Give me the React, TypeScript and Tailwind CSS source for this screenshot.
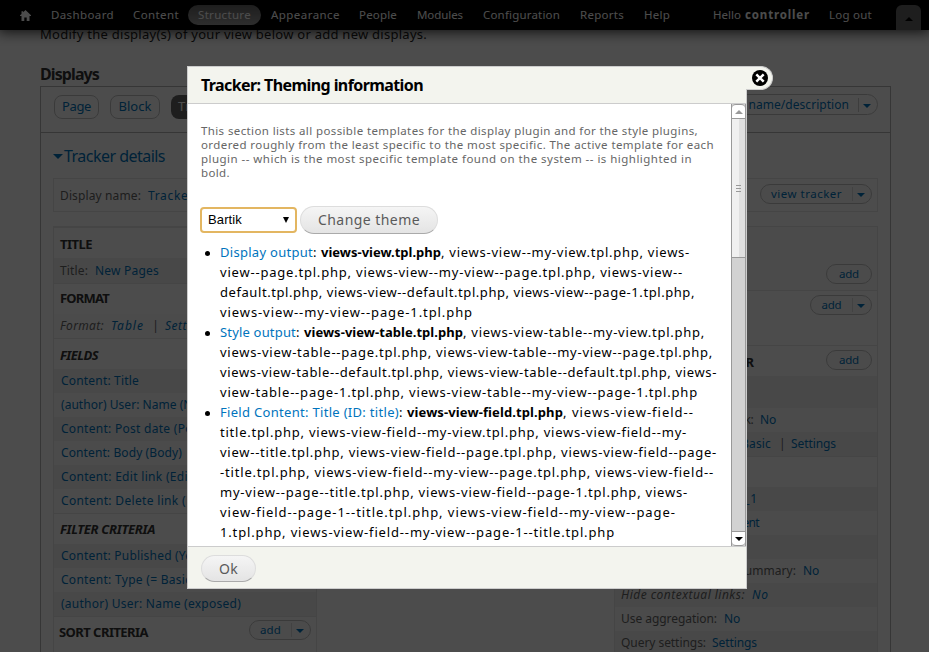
import { useLayoutEffect, useRef } from "react";
import type { ReactNode } from "react";
import clsx from "clsx";

/** Single line of text tracked so that it fills exactly `w` pixels. */
function T({ w, className, children }: { w: number; className?: string; children: string }) {
  const ref = useRef<HTMLSpanElement>(null);
  useLayoutEffect(() => {
    const el = ref.current;
    if (!el) return;
    el.style.letterSpacing = "0px";
    const natural = el.getBoundingClientRect().width;
    el.style.letterSpacing = `${(w - natural) / children.length}px`;
  }, [w, children]);
  return (
    <span ref={ref} className={clsx("inline-block shrink-0 whitespace-pre", className)}>
      {children}
    </span>
  );
}

function Caret({ className, size = "h-1 w-2" }: { className?: string; size?: string }) {
  return (
    <svg viewBox="0 0 8 4" preserveAspectRatio="none" className={clsx("shrink-0 fill-current", size, className)}>
      <path d="M0 0h8L4 4z" />
    </svg>
  );
}

const link = "text-[#0074bd]";

function DropButton({ label, w, width, split }: { label: string; w: number; width: string; split?: boolean }) {
  return (
    <div
      className={clsx(
        "flex h-5 shrink-0 items-center rounded-full border border-[#c4c4c4] bg-[#fcfcfc] text-[11.5px] text-[#0074bd]",
        width,
      )}
    >
      <div className="flex flex-1 justify-center">
        <T w={w}>{label}</T>
      </div>
      {split && (
        <div className="flex h-3.5 w-[19px] items-center justify-center border-l border-[#ddd]">
          <Caret className="mr-0.5 mt-px" />
        </div>
      )}
    </div>
  );
}

function Head({ children, className }: { children?: ReactNode; className?: string }) {
  return (
    <div
      className={clsx(
        "flex items-center border-t border-[#e8e8e8] pl-1.5 pr-[5px] text-[13px] font-bold tracking-tight text-[#333]",
        className,
      )}
    >
      {children}
    </div>
  );
}

function Row({ shade, italic, children, h = "h-6" }: { shade?: boolean; italic?: boolean; children?: ReactNode; h?: string }) {
  return (
    <div
      className={clsx(
        "flex items-center pl-[7px] text-xs text-[#666]",
        h,
        shade ? "bg-[#f2f2f2]" : "bg-[#fbfbfb]",
        italic && "italic",
      )}
    >
      {children}
    </div>
  );
}

function Toolbar() {
  const items: [string, number, string][] = [
    ["Appearance", 69, "ml-2.5"],
    ["People", 38, "ml-[19px]"],
    ["Modules", 46, "ml-5"],
    ["Configuration", 77, "ml-5"],
    ["Reports", 44, "ml-5"],
    ["Help", 26, "ml-5"],
  ];
  return (
    <div className="relative z-10 flex h-[30px] items-center bg-black pl-5 text-[11.5px] text-white shadow-[0_0_14px_2px_rgba(0,0,0,0.8)]">
      <svg viewBox="0 0 11 11" className="h-[11px] w-[11px] fill-white">
        <path d="M5.5 0 11 5.3v.7H9.5v5H6.7V7.5H4.3V11H1.5V6H0v-.7L1.5 3.9V1.2h1.7v1.1z" />
      </svg>
      <T w={63} className="ml-5">Dashboard</T>
      <T w={46} className="ml-[19px]">Content</T>
      <div className="ml-[9px] flex h-5 w-[73px] items-center justify-center rounded-full bg-gradient-to-b from-[#666] to-[#999]">
        <T w={53}>Structure</T>
      </div>
      {items.map(([t, w, m]) => (
        <T key={t} w={w} className={m}>{t}</T>
      ))}
      <T w={28} className="ml-[43px]">Hello</T>
      <T w={65} className="ml-1 font-bold">controller</T>
      <T w={43} className="ml-[19px]">Log out</T>
      <div className="ml-6 mt-[5px] flex h-[25px] w-[25px] items-center justify-center rounded-t-md bg-[#666]">
        <Caret className="mt-[3px] rotate-180 text-black" />
      </div>
    </div>
  );
}

function LeftColumn() {
  const fields: [string, number][] = [
    ["Content: Title", 78],
    ["(author) User: Name (Name)", 160],
    ["Content: Post date (Post date)", 176],
    ["Content: Body (Body)", 121],
    ["Content: Edit link (Edit link)", 160],
    ["Content: Delete link (Delete link)", 192],
  ];
  const filters: [string, number][] = [
    ["Content: Published (Yes)", 141],
    ["Content: Type (= Basic page)", 167],
    ["(author) User: Name (exposed)", 180],
  ];
  return (
    <div className="w-[264px] border-x border-[#e8e8e8]">
      <Head className="h-[31px] pt-1"><T w={32}>TITLE</T></Head>
      <Row shade h="h-[25px]">
        <T w={28} className="-ml-px">Title:</T>
        <T w={64} className={clsx("ml-[7px]", link)}>New Pages</T>
      </Row>
      <Head className="h-[31px]"><T w={49}>FORMAT</T></Head>
      <Row italic>
        <T w={44} className="-ml-px">Format:</T>
        <T w={33} className={clsx("ml-[7px]", link)}>Table</T>
        <T w={4} className="ml-2">|</T>
        <T w={46} className={clsx("ml-[9px]", link)}>Settings</T>
      </Row>
      <Head className="h-[31px] pt-1"><T w={38} className="italic">FIELDS</T></Head>
      {fields.map(([t, w], i) => (
        <Row key={t} shade={i % 2 === 0}><T w={w} className={link}>{t}</T></Row>
      ))}
      <Head className="h-[31px] pt-0.5"><T w={95} className="italic">FILTER CRITERIA</T></Head>
      {filters.map(([t, w], i) => (
        <Row key={t} shade={i % 2 === 0}><T w={w} className={link}>{t}</T></Row>
      ))}
      <Head className="h-[60px] items-start justify-between pt-1">
        <T w={89} className="mt-[2px] -ml-px">SORT CRITERIA</T>
        <div className="-mt-px font-normal tracking-normal">
          <DropButton label="add" w={21} width="w-[62px]" split />
        </div>
      </Head>
    </div>
  );
}

function RightColumn() {
  return (
    <div className="w-[264px] border-x border-[#e8e8e8]">
      <div className="flex h-[63px] items-end justify-end bg-[#fbfbfb] pb-[6px] pr-[5px]">
        <DropButton label="add" w={20} width="w-[46px]" />
      </div>
      <Head className="h-[55px] items-start justify-end pt-1 font-normal tracking-normal">
        <DropButton label="add" w={20} width="w-[62px]" split />
      </Head>
      <Head className="h-[31px] items-start justify-between pt-1">
        <T w={134} className="mt-[3px]">HEADER &amp; FOOTER</T>
        <div className="font-normal tracking-normal"><DropButton label="add" w={20} width="w-[46px]" /></div>
      </Head>
      <Row shade h="h-8" />
      <Row>
        <T w={50} className="ml-[81px]">More link:</T>
        <T w={16} className={clsx("ml-[7px]", link)}>No</T>
      </Row>
      <Row shade>
        <T w={30} className={clsx("ml-[119px]", link)}>Basic</T>
        <T w={4} className="ml-2">|</T>
        <T w={45} className={clsx("ml-2", link)}>Settings</T>
      </Row>
      <Head className="h-[31px]" />
      <Row shade>
        <T w={46} className={clsx("ml-[90px]", link)}>page_1</T>
      </Row>
      <Row>
        <T w={67} className={clsx("ml-[70px]", link)}>No comment</T>
      </Row>
      <Row shade />
      <Row>
        <T w={175} className="-ml-px">Hide attachments in summary:</T>
        <T w={16} className={clsx("ml-[7px]", link)}>No</T>
      </Row>
      <Row shade italic>
        <T w={124} className="-ml-px">Hide contextual links:</T>
        <T w={17} className={clsx("ml-[7px]", link)}>No</T>
      </Row>
      <Row>
        <T w={96} className="-ml-px">Use aggregation:</T>
        <T w={16} className={clsx("ml-[7px]", link)}>No</T>
      </Row>
      <Row shade>
        <T w={85} className="-ml-px">Query settings:</T>
        <T w={45} className={clsx("ml-[6px]", link)}>Settings</T>
      </Row>
    </div>
  );
}

function Page() {
  return (
    <div className="h-full bg-white">
      <Toolbar />
      <div className="pl-10">
        <div className="-mt-[5px] h-[22px] text-[13px] leading-[18px] text-[#222]">
          <T w={387}>Modify the display(s) of your view below or add new displays.</T>
        </div>
        <div className="mt-[17px] flex h-[22px] items-start text-base font-bold leading-5 text-[#333]">
          <T w={59}>Displays</T>
        </div>
        <div className="h-[600px] w-[851px] border border-[#b4b4b4]">
          <div className="flex h-[46px] items-start border-b border-[#b4b4b4] pl-[13px] pr-3 text-[13px]">
            <div className="mt-2 flex h-6 w-[45px] items-center justify-center rounded-lg border border-[#c4c4c4]">
              <T w={29} className={link}>Page</T>
            </div>
            <div className="ml-[11px] mt-2 flex h-6 w-[50px] items-center justify-center rounded-lg border border-[#c4c4c4]">
              <T w={33} className={link}>Block</T>
            </div>
            <div className="ml-[11px] mt-2 flex h-6 w-[66px] items-center justify-center rounded-lg bg-[#666]">
              <T w={52} className="text-white">Tracker</T>
            </div>
            <div className="ml-auto mt-[7px] flex h-[21px] w-[190px] items-center rounded-full border border-[#c4c4c4] text-[12px]">
              <div className="flex flex-1 justify-end pr-[9px]">
                <T w={154} className={link}>edit view name/description</T>
              </div>
              <div className="flex h-3.5 w-[19px] items-center justify-center border-l border-[#ccc] text-[#0074bd]">
                <Caret className="mr-0.5 mt-0.5" />
              </div>
            </div>
          </div>
          <div className="flex h-[45px] items-center pl-3 text-[#0074bd]">
            <Caret size="h-[5px] w-2.5" className="mt-px" />
            <T w={101} className="ml-px text-base">Tracker details</T>
          </div>
          <div className="ml-3 flex h-[34px] w-[825px] items-center border border-[#e8e8e8] pl-1.5 pr-[5px] text-xs text-[#666]">
            <T w={81} className="mt-0.5">Display name:</T>
            <T w={46} className={clsx("ml-[7px] mt-0.5", link)}>Tracker</T>
            <div className="ml-auto -mt-0.5"><DropButton label="view tracker" w={71} width="w-[112px]" split /></div>
          </div>
          <div className="ml-3 mt-[14px] flex w-[825px] justify-between border-t border-[#e8e8e8]">
            <LeftColumn />
            <RightColumn />
          </div>
        </div>
      </div>
    </div>
  );
}

function Templates() {
  const line = "flex h-5 items-center";
  const item = "relative";
  const dot = <span className="absolute -left-[15px] top-[8px] h-[5px] w-[5px] rounded-full bg-black" />;
  return (
    <ul className="mt-[9px] pl-8 text-[13px] text-black">
      <li className={item}>
        {dot}
        <div className={line}>
          <T w={93} className={link}>Display output</T>
          <T w={8}>: </T>
          <T w={120} className="font-bold">views-view.tpl.php</T>
          <T w={249}>, views-view--my-view.tpl.php, views-</T>
        </div>
        <div className={line}><T w={463}>view--page.tpl.php, views-view--my-view--page.tpl.php, views-view--</T></div>
        <div className={line}><T w={475}>default.tpl.php, views-view--default.tpl.php, views-view--page-1.tpl.php,</T></div>
        <div className={line}><T w={253}>views-view--my-view--page-1.tpl.php</T></div>
      </li>
      <li className={item}>
        {dot}
        <div className={line}>
          <T w={76} className={link}>Style output</T>
          <T w={8}>: </T>
          <T w={159} className="font-bold">views-view-table.tpl.php</T>
          <T w={242}>, views-view-table--my-view.tpl.php,</T>
        </div>
        <div className={line}><T w={493}>views-view-table--page.tpl.php, views-view-table--my-view--page.tpl.php,</T></div>
        <div className={line}><T w={497}>views-view-table--default.tpl.php, views-view-table--default.tpl.php, views-</T></div>
        <div className={line}><T w={478}>view-table--page-1.tpl.php, views-view-table--my-view--page-1.tpl.php</T></div>
      </li>
      <li className={item}>
        {dot}
        <div className={line}>
          <T w={179} className={link}>Field Content: Title (ID: title)</T>
          <T w={8}>: </T>
          <T w={156} className="font-bold">views-view-field.tpl.php</T>
          <T w={131}>, views-view-field--</T>
        </div>
        <div className={line}><T w={467}>title.tpl.php, views-view-field--my-view.tpl.php, views-view-field--my-</T></div>
        <div className={line}><T w={497}>view--title.tpl.php, views-view-field--page.tpl.php, views-view-field--page-</T></div>
        <div className={line}><T w={494}>-title.tpl.php, views-view-field--my-view--page.tpl.php, views-view-field--</T></div>
        <div className={line}><T w={468}>my-view--page--title.tpl.php, views-view-field--page-1.tpl.php, views-</T></div>
        <div className={line}><T w={456}>view-field--page-1--title.tpl.php, views-view-field--my-view--page-</T></div>
        <div className={line}><T w={395}>1.tpl.php, views-view-field--my-view--page-1--title.tpl.php</T></div>
      </li>
    </ul>
  );
}

function Scrollbar() {
  return (
    <div className="flex w-[15px] shrink-0 flex-col border-x border-[#999] bg-[#d2d2d2]">
      <div className="flex h-[15px] items-center justify-center rounded-t border-y border-[#999] bg-white">
        <Caret className="rotate-180 text-[#999]" />
      </div>
      <div className="flex h-[139px] flex-col items-center justify-center gap-0.5 border-b border-[#999] bg-gradient-to-r from-[#f0f0f0] from-50% to-[#e0e0e0] to-50%">
        <div className="h-px w-[5px] bg-[#999]" />
        <div className="h-px w-[5px] bg-[#999]" />
        <div className="h-px w-[5px] bg-[#999]" />
      </div>
      <div className="flex-1" />
      <div className="flex h-[15px] items-center justify-center rounded-b border-y border-[#999] bg-white">
        <Caret className="text-black" />
      </div>
    </div>
  );
}

function Modal() {
  const pill =
    "flex items-center justify-center rounded-full border border-[#ddd] border-b-[#aaa] bg-gradient-to-b from-[#f5f5f5] to-[#e4e4e4] text-[#5a5a5a]";
  return (
    <div className="absolute left-[187px] top-[66px] flex h-[523px] w-[560px] flex-col border border-[#ccc] bg-white">
      <div className="absolute -top-px left-[558px] flex h-6 w-[27px] items-center rounded-r-full border border-l-0 border-[#ccc] bg-[#f3f4ee]">
        <svg viewBox="0 0 16 16" className="ml-[6px] h-4 w-4">
          <circle cx="8" cy="8" r="8" fill="#000" />
          <path d="m4.3 4.3 7.4 7.4m0-7.4-7.4 7.4" stroke="#fff" strokeWidth="2.4" />
        </svg>
      </div>
      <div className="flex h-[37px] items-center border-b border-[#ccc] bg-[#f3f4ee] pl-[13px] text-base font-bold text-black">
        <T w={222}>Tracker: Theming information</T>
      </div>
      <div className="flex h-[442px]">
        <div className="flex-1">
          <div className="ml-[13px] mt-5 flex flex-col items-start text-[11.5px] leading-[14px] text-[#666]">
            <T w={497}>This section lists all possible templates for the display plugin and for the style plugins,</T>
            <T w={513}>ordered roughly from the least specific to the most specific. The active template for each</T>
            <T w={491}>plugin -- which is the most specific template found on the system -- is highlighted in</T>
            <T w={29}>bold.</T>
          </div>
          <div className="ml-3 mt-[26px] flex items-center">
            <div className="flex h-[26px] w-[97px] items-center justify-between rounded-sm border-2 border-[#e3b661] bg-white pl-1.5 pr-1.5 font-['Liberation_Sans',sans-serif] text-[13px] text-black">
              <T w={34}>Bartik</T>
              <svg viewBox="0 0 6 6" className="h-1.5 w-1.5"><path d="M0 0h6L3 6z" /></svg>
            </div>
            <div className={clsx(pill, "ml-[3px] h-7 w-[138px] text-sm")}><T w={102}>Change theme</T></div>
          </div>
          <Templates />
        </div>
        <Scrollbar />
      </div>
      <div className="flex flex-1 items-center border-t border-[#ccc] bg-[#f3f4ee] pl-[13px]">
        <div className={clsx(pill, "mt-0.5 h-[27px] w-[55px] text-sm")}><T w={19}>Ok</T></div>
      </div>
    </div>
  );
}

export default function App() {
  return (
    <div className="relative h-[652px] w-[929px] overflow-hidden font-['Noto_Sans','Open_Sans',sans-serif]">
      <Page />
      <div className="absolute inset-0 z-20 bg-black/70" />
      <div className="absolute inset-0 z-30">
        <Modal />
      </div>
    </div>
  );
}
